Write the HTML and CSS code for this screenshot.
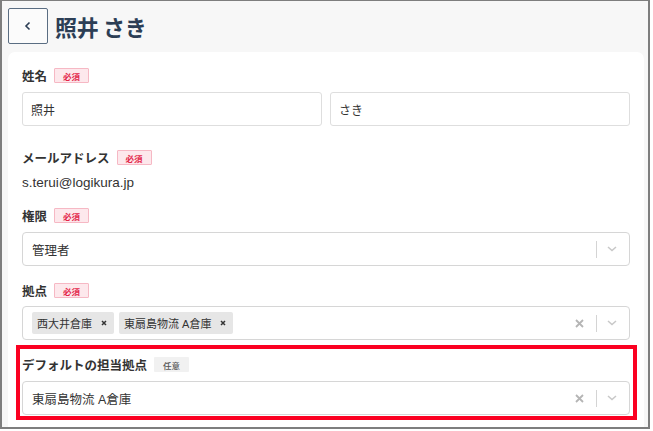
FILE: index.html
```
<!DOCTYPE html>
<html lang="ja">
<head>
    <meta charset="UTF-8">
    <meta name="viewport" content="width=device-width, initial-scale=1.0">
    <title>ユーザー編集</title>
    <link rel="stylesheet" href="styles.css">
</head>
<body>
    <div class="frame">
        <!-- Page header -->
        <div class="page-head">
            <button class="back-btn" aria-label="戻る">
                <svg width="10" height="10" viewBox="0 0 10 10"><polyline points="6.5,1.5 3,5 6.5,8.5" fill="none" stroke="#2c3e55" stroke-width="1.6"/></svg>
            </button>
            <h1>照井 さき</h1>
        </div>

        <div class="card">
            <!-- Name -->
            <div class="field">
                <div class="field-label">姓名 <span class="badge required">必須</span></div>
                <div class="name-row">
                    <input class="text-input" type="text" value="照井">
                    <input class="text-input" type="text" value="さき">
                </div>
            </div>

            <!-- Mail -->
            <div class="field field-mail">
                <div class="field-label">メールアドレス <span class="badge required">必須</span></div>
                <div class="plain-value">s.terui@logikura.jp</div>
            </div>

            <!-- Role -->
            <div class="field field-role">
                <div class="field-label">権限 <span class="badge required">必須</span></div>
                <div class="select">
                    <div class="select-value">管理者</div>
                    <div class="indicators">
                        <span class="sep"></span>
                        <svg class="chevron" width="10" height="6" viewBox="0 0 10 6"><polyline points="1,1 5,4.6 9,1" fill="none" stroke="#c8c8c8" stroke-width="1.5"/></svg>
                    </div>
                </div>
            </div>

            <!-- Warehouses -->
            <div class="field field-base">
                <div class="field-label">拠点 <span class="badge required">必須</span></div>
                <div class="select multi">
                    <div class="select-value tags">
                        <span class="tag">西大井倉庫 <span class="tag-x"><svg width="6" height="6" viewBox="0 0 6 6"><path d="M1 1L5 5M5 1L1 5" stroke="#333" stroke-width="1.5"/></svg></span></span>
                        <span class="tag">東扇島物流 A倉庫 <span class="tag-x"><svg width="6" height="6" viewBox="0 0 6 6"><path d="M1 1L5 5M5 1L1 5" stroke="#333" stroke-width="1.5"/></svg></span></span>
                    </div>
                    <div class="indicators">
                        <svg class="clear" width="9" height="9" viewBox="0 0 9 9"><path d="M1 1L8 8M8 1L1 8" stroke="#b5b5b5" stroke-width="1.8"/></svg>
                        <span class="sep"></span>
                        <svg class="chevron" width="10" height="6" viewBox="0 0 10 6"><polyline points="1,1 5,4.6 9,1" fill="none" stroke="#c8c8c8" stroke-width="1.5"/></svg>
                    </div>
                </div>
            </div>

            <!-- Default warehouse (highlighted) -->
            <div class="highlight">
                <div class="field">
                    <div class="field-label">デフォルトの担当拠点 <span class="badge optional">任意</span></div>
                    <div class="select">
                        <div class="select-value">東扇島物流 A倉庫</div>
                        <div class="indicators">
                            <svg class="clear" width="9" height="9" viewBox="0 0 9 9"><path d="M1 1L8 8M8 1L1 8" stroke="#b5b5b5" stroke-width="1.8"/></svg>
                            <span class="sep"></span>
                            <svg class="chevron" width="10" height="6" viewBox="0 0 10 6"><polyline points="1,1 5,4.6 9,1" fill="none" stroke="#c8c8c8" stroke-width="1.5"/></svg>
                        </div>
                    </div>
                </div>
            </div>
        </div>
    </div>
</body>
</html>
```

FILE: styles.css
```
body {
    margin: 0;
    padding: 0;
    background: #fff;
    font-family: "Liberation Sans", "Noto Sans CJK JP", sans-serif;
    color: #333;
}

.frame {
    box-sizing: border-box;
    width: 650px;
    height: 429px;
    border: 2px solid #7e7e7e;
    border-top-width: 1px;
    background: #f7f7f7;
    padding: 7px 4px 0 6px;
    overflow: hidden;
}

.page-head {
    display: flex;
    align-items: center;
    gap: 7px;
    height: 36px;
    margin-bottom: 8px;
}

.back-btn {
    box-sizing: border-box;
    width: 40px;
    height: 36px;
    display: flex;
    align-items: center;
    justify-content: center;
    background: #fbfbfb;
    border: 1px solid #5a6d82;
    border-radius: 2px;
    padding: 0;
}

.page-head h1 {
    margin: 0;
    font-family: "Noto Sans CJK JP", sans-serif;
    font-size: 22px;
    font-weight: 700;
    color: #2c3e55;
    letter-spacing: -0.3px;
    line-height: 1;
}

.card {
    background: #fff;
    border-radius: 7px;
    padding: 16px 14px 20px;
    min-height: 380px;
}

.field-label {
    display: flex;
    align-items: center;
    gap: 7px;
    height: 15px;
    font-family: "Noto Sans CJK JP", sans-serif;
    font-size: 12.5px;
    font-weight: 700;
    color: #333;
    margin-bottom: 9px;
}

.badge {
    box-sizing: border-box;
    display: inline-flex;
    align-items: center;
    justify-content: center;
    width: 35px;
    height: 15px;
    font-size: 8.5px;
    font-weight: 700;
    border-radius: 1px;
}

.badge.required {
    background: #fde8ec;
    border: 1px solid #f6b8c4;
    color: #e3274a;
}

.badge.optional {
    background: #f1f1f1;
    color: #555;
    font-weight: 500;
}

.name-row {
    display: grid;
    grid-template-columns: 1fr 1fr;
    gap: 8px;
}

.text-input {
    box-sizing: border-box;
    width: 100%;
    height: 34px;
    border: 1px solid #dedede;
    border-radius: 3px;
    padding: 0 8px;
    font-family: "Liberation Sans", "Noto Sans CJK JP", sans-serif;
    font-size: 12px;
    color: #333;
    outline: none;
}

.field-mail {
    margin-top: 24px;
}

.field-mail .field-label {
    margin-bottom: 10px;
}

.plain-value {
    font-size: 13.5px;
    line-height: 16px;
    color: #333;
}

.field-role {
    margin-top: 17px;
}

.field-base {
    margin-top: 17px;
}

.field-base .field-label {
    margin-bottom: 8px;
}

.select {
    box-sizing: border-box;
    display: flex;
    align-items: center;
    height: 34px;
    border: 1px solid #d6d6d6;
    border-radius: 4px;
    background: #fff;
}

.select-value {
    flex: 1;
    padding-left: 9px;
    font-size: 12.5px;
    color: #333;
}

.tags {
    display: flex;
    gap: 5px;
}

.tag {
    display: inline-flex;
    align-items: center;
    height: 22px;
    padding-left: 5px;
    background: #e6e6e6;
    border-radius: 2px;
    font-size: 11px;
    color: #333;
}

.tag-x {
    display: inline-flex;
    align-items: center;
    padding: 0 7px 0 9px;
}

.indicators {
    display: flex;
    align-items: center;
    height: 100%;
    padding-right: 12px;
}

.indicators .clear {
    margin-right: 12px;
}

.sep {
    width: 1px;
    height: 17px;
    background: #d4d4d4;
    margin-right: 10px;
}

.highlight {
    margin: 5px -7px 0 -6px;
    border: 4px solid #fb0021;
    padding: 8px 3px 1px 2px;
}
```
